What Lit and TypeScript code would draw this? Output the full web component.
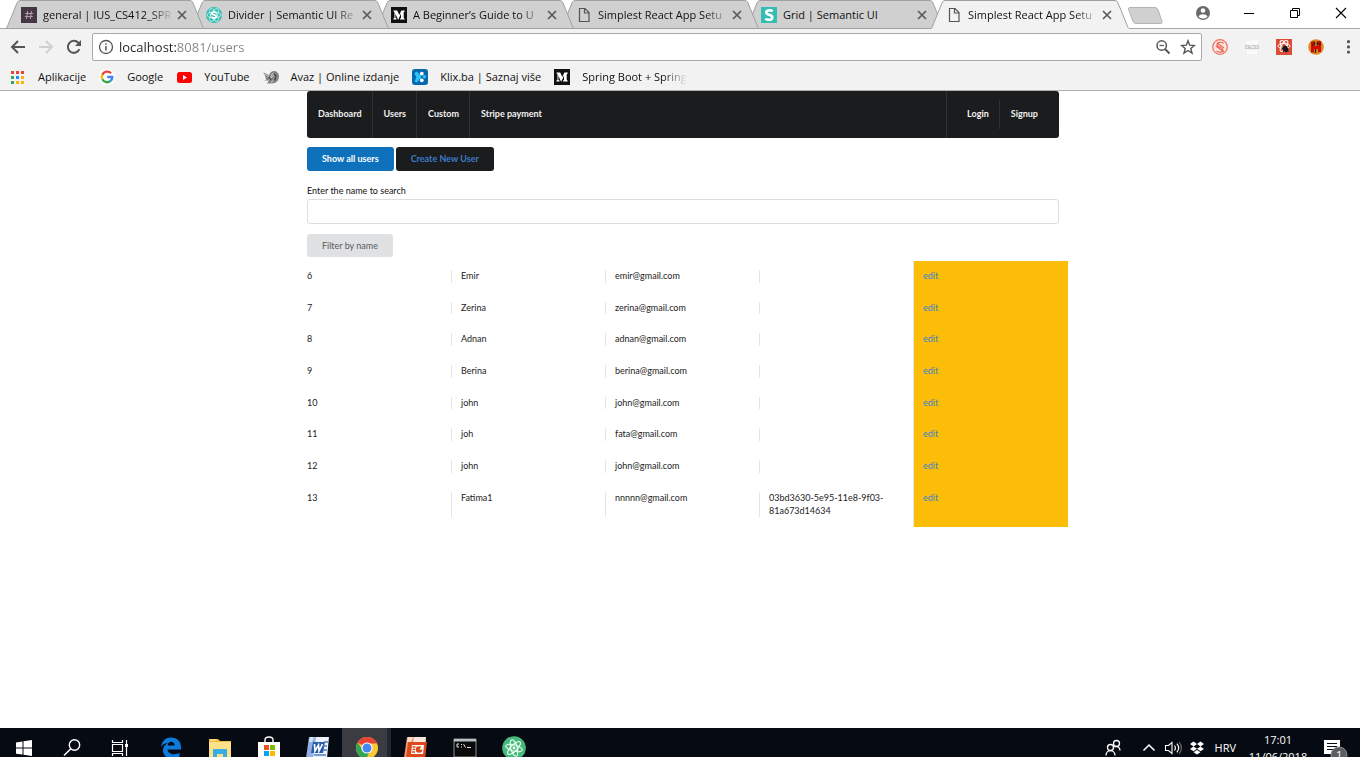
import { LitElement, html, css, svg } from "lit";
import { customElement, property, state } from "lit/decorators.js";

const icons: Record<string, unknown> = {
  slack: svg`<rect width="16" height="16" fill="#443642"/><path d="M6.600 4 5.600 12M10.400 4 9.400 12M4.200 6.500h8M3.800 9.600h8" stroke="#b59fb2" fill="none"/>`,
  react: svg`<circle cx="8" cy="8" r="8" fill="#35bdb2"/><g fill="none" stroke="#c9f3ef" stroke-width=".9"><ellipse cx="8" cy="8" rx="7" ry="3"/><ellipse cx="8" cy="8" rx="7" ry="3" transform="rotate(60 8 8)"/><ellipse cx="8" cy="8" rx="7" ry="3" transform="rotate(120 8 8)"/></g><path d="M10.300 5.800C9 4.700 6 4.800 6 6.400c0 1.800 4.200 1.200 4.200 3.100 0 1.700-3 1.800-4.500.6" stroke="#fff" stroke-width="1.700" fill="none"/>`,
  medium: svg`<rect width="16" height="16" fill="#12100e"/><path d="M2.500 3.500h3.700L8.300 8l2-4.500h3.400v1l-1 .8v5.600l1 .8v.9H9v-.9l1-.8V6.500L7.400 12.600H7L4.400 6.700v4l1.200 1.100v.8H2.400v-.8l1.100-1.100V5.300l-1-1z" fill="#fff"/>`,
  file: svg`<path d="M3.500 1.500h5.500l4 4v9h-9.500zM8.500 1.500V6H13" fill="none" stroke="#555" stroke-width="1.200"/>`,
  semantic: svg`<rect width="16" height="16" fill="#35bdb2"/><path d="M11.700 4.300C9.600 2.800 5.300 2.900 5.300 5.500c0 3 6 1.700 6 4.900 0 3-4.700 2.900-7 1.300" stroke="#fff" stroke-width="2.600" fill="none"/>`,
  apps: svg`<path d="M1 2h3v3H1zM6 2h3v3H6zM11 2h3v3h-3z" fill="#ea4335"/><path d="M1 7h3v3H1zM1 12h3v3H1z" fill="#34a853"/><path d="M6 7h3v3H6z" fill="#1a8cff"/><path d="M11 7h3v3h-3zM6 12h3v3H6zM11 12h3v3h-3z" fill="#fbb605"/>`,
  google: svg`<circle cx="8" cy="8" r="8" fill="#fff"/><g fill="none" stroke-width="2.400"><path d="M12 4.300A5.300 5.300 0 0 0 3.300 5.700" stroke="#ea4335"/><path d="M3.300 5.700a5.300 5.300 0 0 0 0 4.600" stroke="#fbbc05"/><path d="M3.300 10.300a5.300 5.300 0 0 0 8.300 1.600" stroke="#34a853"/><path d="M11.600 11.900A5.300 5.300 0 0 0 13.300 8H8.200" stroke="#4285f4"/></g>`,
  youtube: svg`<rect x="1" y="3" width="15" height="11" rx="2.500" fill="#f00"/><path d="M7 6v5l4-2.500z" fill="#fff"/>`,
  avaz: svg`<path d="M0 3.500c2 .5 4 1 5.500 3L8 3c3-2.500 8-.5 8 4.500 0 4-3 7-7 7H3.500c2-1 2-2 1-3H1l2.500-1C2 9 3 6 0 3.500z" fill="#858585"/><path d="M2 5l5 4 3-5M5 12l6-6M8 13.500l6-5.500" stroke="#c9c9c9" fill="none"/><path d="M11 5c2.500 1 2.500 4 0 6.500M6 8l2 3" stroke="#444" stroke-width="1.400" fill="none"/>`,
  klix: svg`<rect width="16" height="16" rx="3" fill="#0769ad"/><path d="M3 3.500 5 2.500 8 6v3.500L5 13.500l-2.500-1L4.500 8 2.500 5z" fill="#2fc3f7"/><circle cx="9.800" cy="4.600" r="1.900" fill="#fff"/><circle cx="12.400" cy="7.800" r="1.700" fill="#2fc3f7"/><circle cx="9.800" cy="11.300" r="1.900" fill="#fff"/><path d="M6 8h3" stroke="#2fc3f7" stroke-width="4"/>`,
  back: svg`<path d="M15 8H2.500M8 2 2 8l6 6" fill="none" stroke="#555" stroke-width="2"/>`,
  forward: svg`<path d="M1 8h12.500M8 2l6 6-6 6" fill="none" stroke="#d0d0d0" stroke-width="2"/>`,
  reload: svg`<path d="M13.400 10.200A6 6 0 1 1 12.300 3.800L14 5.500" fill="none" stroke="#555" stroke-width="2"/><path d="M15 1v6H9z" fill="#555"/>`,
  info: svg`<circle cx="8" cy="8" r="6.500" fill="none" stroke="#555" stroke-width="1.300"/><path d="M8 7v4.500M8 4.300v1.500" stroke="#555" stroke-width="1.500"/>`,
  zoomOut: svg`<circle cx="6.700" cy="6.500" r="4.700" fill="none" stroke="#555" stroke-width="1.500"/><path d="M10 10l4.500 4.500" stroke="#555" stroke-width="2"/><path d="M4.500 6.500h4.400" stroke="#555" stroke-width="1.200"/>`,
  star: svg`<path d="M8 1.800l1.700 4.400 4.700.3-3.600 3 1.200 4.600L8 11.500l-4 2.600 1.200-4.600-3.600-3 4.700-.3z" fill="none" stroke="#555" stroke-width="1.400"/>`,
  extS: svg`<circle cx="8" cy="8" r="7.300" fill="#fbe9e6" stroke="#f0705f" stroke-width="1.300"/><path d="M11.500 4.500C9.500 2.500 5 3 5 5.700 5 8.500 11 8 11 11c0 2.500-4.500 2.800-6.500.8M4 7l8 6M5 4l7 5" fill="none" stroke="#ee6553" stroke-width="1.200"/>`,
  extGray: svg`<path d="M2 2h5v4H2zM8 1h6v5H8zM3 11h10v4H3z" fill="#fafafa"/><path d="M1 6h14v4H1z" fill="#ccc"/><path d="M3 7v2M6 7h2v2M10 7v2M13 7v2" stroke="#fff" fill="none"/>`,
  extRed: svg`<rect width="16" height="16" fill="#dd4b39"/><g fill="none" stroke="#fff"><ellipse cx="8" cy="7" rx="6" ry="2.500"/><ellipse cx="8" cy="7" rx="6" ry="2.500" transform="rotate(60 8 7)"/><ellipse cx="8" cy="7" rx="6" ry="2.500" transform="rotate(120 8 7)"/></g><ellipse cx="9.500" cy="10" rx="2.600" ry="3.400" fill="#151515" transform="rotate(-35 9.500 10)"/><path d="M5.500 9l7 3M7 13l4-6" stroke="#151515"/>`,
  extBug: svg`<circle cx="8" cy="8" r="7.800" fill="#d98a20"/><path d="M3 2.500h3v11H3zM10 2h3v11h-3zM5 7h6v3H5z" fill="#d50b00"/><path d="M6.500 2.500v4M9.300 2.500v4M7.500 10v4M4 6h1M11 5h2" stroke="#3b1505" stroke-width="1.300"/>`,
  dots: svg`<circle cx="8.500" cy="2.700" r="1.600" fill="#555"/><circle cx="8.500" cy="7.900" r="1.600" fill="#555"/><circle cx="8.500" cy="13.100" r="1.600" fill="#555"/>`,
  close: svg`<path d="M4 4l8 8M12 4l-8 8" stroke="#5a5a5a" stroke-width="1.700"/>`,
  profile: svg`<circle cx="8" cy="8" r="7" fill="#696969"/><circle cx="8" cy="5.500" r="2.300" fill="#fff"/><path d="M3.500 11.400c1.500-3 7.500-3 9 0-2 2.700-7 2.700-9 0z" fill="#fff"/>`,
  minimize: svg`<path d="M3 8.500h10" stroke="#000"/>`,
  restore: svg`<path d="M3.500 5.500h7v7h-7zM5.500 5.500v-2h7v7h-2" fill="none" stroke="#000"/>`,
  exit: svg`<path d="M3 3l10 10M13 3 3 13" stroke="#000" stroke-width="1.100"/>`,
};

const trayIcons: Record<string, unknown> = {
  windows: svg`<path d="M4 6.400l6.500-1v6.100H4zM11.500 5.200 20 4v7.500h-8.500zM4 12.500h6.500v6.100L4 17.700zM11.500 12.500H20V20l-8.500-1.200z" fill="#fff"/>`,
  search: svg`<circle cx="14.500" cy="9" r="5.200" fill="none" stroke="#fff" stroke-width="1.400"/><path d="M10.800 12.700 4 19.500" stroke="#fff" stroke-width="1.500"/>`,
  taskview: svg`<path d="M4.500 4v2.500h10V4M4.500 8.500h10v7h-10zM4.500 20v-2.500h10V20M18.500 4v16" fill="none" stroke="#fff" stroke-width="1.200"/><path d="M17 8h3v3h-3z" fill="#fff"/>`,
  edge: svg`<path d="M2 11C3 4.500 7 1.500 12 1.500c6 0 10 4 10 9.500v2.500H8.500c.4 5 7.500 6 12 3.300V21C12 25 3.500 21.500 4 14c.2-3 2-5.500 5-7C6 7 3.500 8.500 2 11zm6.700-1.500h7C15.500 4.500 9 4.500 8.700 9.500z" fill="#0c7bdc"/>`,
  folder: svg`<path d="M1 3h9l2 2h11v17H1z" fill="#f2bd3a"/><path d="M1 6h22v16H1z" fill="#ffe08b"/><path d="M5 13h14v9h-4v-4H9v4H5z" fill="#39ade3"/><path d="M2 4h6" stroke="#fff3c0"/>`,
  store: svg`<path d="M8 6V4c0-4 8-4 8 0v2" fill="none" stroke="#fff" stroke-width="1.400"/><path d="M1 6h22v17H1z" fill="#fff"/><path d="M7 9h5v5H7z" fill="#f25022"/><path d="M13 9h5v5h-5z" fill="#7fba00"/><path d="M7 15h5v5H7z" fill="#00a4ef"/><path d="M13 15h5v5h-5z" fill="#ffb900"/>`,
  word: svg`<path d="M5 1h18l-2 21H5z" fill="#eef3fb"/><path d="M3 1h7L7 22H0z" fill="#8fb0e0"/><path d="M4 1h4L6 6H3z" fill="#d5e2f6"/><path d="M7 6h12l-2 11H5z" fill="#2a5caa"/><path d="M8.500 8l.5 7 3.500-6 .5 6 3.500-7" fill="none" stroke="#fff" stroke-width="1.600"/><path d="M18 6h4M17 10h4M17 14h4M8 19h12" stroke="#4e7fc4" stroke-width="1.500"/>`,
  chrome: svg`<circle cx="12" cy="12" r="11" fill="#fcc934"/><path d="M12 12 2.500 6.500A11 11 0 0 1 22 7.500H12z" fill="#e94335"/><path d="M2.500 6.500A11 11 0 0 0 11 23l4.500-9L8 14z" fill="#35a455"/><circle cx="12" cy="12" r="5.600" fill="#fff"/><circle cx="12" cy="12" r="4.500" fill="#4588f1"/>`,
  powerpoint: svg`<path d="M5 1h17l-1 21H5z" fill="#fbe8df"/><path d="M3 1h7L7 22H0z" fill="#ef9a7a"/><path d="M4 1h5L7 6H3z" fill="#fbd9cb"/><path d="M4 6h19l-2 16H2z" fill="#dc4a1c"/><path d="M8 9h12l-1 9H7z" fill="#fff"/><circle cx="15" cy="13.500" r="3.300" fill="#dc4a1c"/><path d="M15 13.500h3.500V10z" fill="#fff"/><path d="M8.500 11h3M8.500 13.500h2.500M8 16h3" stroke="#dc4a1c" stroke-width="1.300"/>`,
  console: svg`<path d="M1 3h22v18H1z" fill="#0a0a0a" stroke="#8d8d8d"/><path d="M1 3h22v2.500H1z" fill="#b9bfc6"/><path d="M6 8H4v3h2M8.500 8v1M8.500 10.500v1M10.500 8l2 3.500M14 11.500h4" stroke="#e5e5e5" fill="none"/>`,
  atom: svg`<circle cx="12" cy="12" r="11.800" fill="#48b97c"/><g fill="none" stroke="#eafff3" stroke-width="1.100"><ellipse cx="12" cy="12" rx="8.500" ry="3.200" transform="rotate(15 12 12)"/><ellipse cx="12" cy="12" rx="8.500" ry="3.200" transform="rotate(75 12 12)"/><ellipse cx="12" cy="12" rx="8.500" ry="3.200" transform="rotate(135 12 12)"/></g><circle cx="12" cy="12" r="1.400" fill="#fff"/>`,
  people: svg`<g fill="none" stroke="#fff" stroke-width="1.300"><circle cx="9.500" cy="11.500" r="3"/><path d="M5 19.500c0-6.500 9-6.500 9 0"/><circle cx="15.500" cy="7.500" r="3"/><path d="M13.500 11c3-1.500 5.500.5 5.500 3.500"/></g>`,
  chevron: svg`<path d="M6.500 14.500l5.500-5.500 5.500 5.500" fill="none" stroke="#fff" stroke-width="1.500"/>`,
  speaker: svg`<path d="M4.500 9.500h3l3.500-3v11l-3.500-3h-3z" fill="none" stroke="#fff" stroke-width="1.100"/><path d="M13.500 9.500c1.200 1.500 1.200 3.500 0 5M15.800 7.700c2.300 2.500 2.300 6 0 8.600" fill="none" stroke="#fff" stroke-width="1.100"/><path d="M18 6c3.200 3.500 3.200 8.500 0 12" fill="none" stroke="#777" stroke-width="1.100"/>`,
  dropbox: svg`<path d="M8.500 5.500 12 8l3.500-2.500L19 8l-3.500 2.500L19 13l-3.500 2.200L12 12.700l-3.500 2.500L5 13l3.500-2.500L5 8zM8.500 16.200 12 14l3.500 2.200L12 18.500zM12 8l-3.500 2.500L12 12.700l3.500-2.200z" fill="#fff" fill-rule="evenodd"/>`,
};

@customElement("ui-icon")
class UiIcon extends LitElement {
  static styles = css`
    :host { display: block; flex: none; line-height: 0; }
    .small { width: 16px; height: 16px; }
    .large { width: 24px; height: 24px; }
  `;
  @property() name = "";
  render() {
    return this.name in icons
      ? html`<svg class="small" viewBox="0 0 16 16" aria-hidden="true">${icons[this.name]}</svg>`
      : html`<svg class="large" viewBox="0 0 24 24" aria-hidden="true">${trayIcons[this.name]}</svg>`;
  }
}

const tabs = [
  ["slack", "general | IUS_CS412_SPR"],
  ["react", "Divider | Semantic UI Re"],
  ["medium", "A Beginner’s Guide to U"],
  ["file", "Simplest React App Setu"],
  ["semantic", "Grid | Semantic UI"],
  ["file", "Simplest React App Setu"],
];

@customElement("browser-chrome")
class BrowserChrome extends LitElement {
  static styles = css`
    :host { display: block; font: 11px/16px "Open Sans", "Noto Sans", sans-serif; color: #111; }
    button { border: 0; padding: 0; background: none; font: inherit; color: inherit; }
    .strip { display: flex; align-items: flex-start; height: 29px; padding-left: 6px; background: linear-gradient(#fff 28px, #a8a8a8 28px); isolation: isolate; }
    .tab { position: relative; display: flex; align-items: center; flex: 0 1 198px; min-width: 0; height: 29px; padding: 0 14px 0 15px; margin-right: -13px; box-sizing: border-box; }
    .tab:nth-child(1) { z-index: 5; }
    .tab:nth-child(2) { z-index: 4; }
    .tab:nth-child(3) { z-index: 3; }
    .tab:nth-child(4) { z-index: 2; }
    .tab:nth-child(5) { z-index: 1; }
    .tab.active { z-index: 6; }
    .shape { position: absolute; inset: 0; width: 100%; height: 100%; z-index: -1; }
    .title { flex: 1; min-width: 0; margin-left: 6px; white-space: nowrap; text-align: left; }
    .faded { -webkit-mask-image: linear-gradient(90deg, #000 calc(100% - 24px), transparent); }
    .newtab { width: 36px; height: 19px; margin: 6px 0 0 11px; }
    .newtab svg { display: block; }
    .window { display: flex; align-items: center; gap: 30px; margin-left: auto; padding: 5px 11px 0 0; }
    .toolbar { display: flex; align-items: center; height: 36px; padding: 0 4px 0 10px; background: #f2f2f2; }
    .nav { display: flex; gap: 12px; }
    .address { display: flex; align-items: center; flex: 1; height: 26px; margin: 0 10px; padding: 0 5px; border: 1px solid #a9a9a9; border-radius: 2px; background: #fff; }
    .url { flex: 1; min-width: 0; height: 20px; margin: 0 6px 0 5px; padding: 0; border: 0; outline: 0; font: 13px/20px "Open Sans", "Noto Sans", sans-serif; background: linear-gradient(90deg, #222 57px, #848484 57px); -webkit-background-clip: text; background-clip: text; -webkit-text-fill-color: transparent; }
    .tools { display: flex; gap: 9px; }
    .extensions { display: flex; gap: 16px; }
    .bookmarks { display: flex; align-items: center; height: 23px; padding: 0 0 2px 10px; background: #f2f2f2; border-bottom: 1px solid #b0b0b0; gap: 13px; }
    .bookmark { display: flex; gap: 12px; align-items: center; color: inherit; text-decoration: none; white-space: nowrap; }
  `;
  @state() selected = 5;
  render() {
    const bookmarks = [
      ["apps", "Aplikacije"], ["google", "Google"], ["youtube", "YouTube"],
      ["avaz", "Avaz | Online izdanje"], ["klix", "Klix.ba | Saznaj više"], ["medium", "Spring Boot + Spring"],
    ];
    return html`
      <div class="strip">
        ${tabs.map(([icon, title], i) => html`
          <div class="tab ${i === this.selected ? "active" : ""}">
            <svg class="shape" viewBox="0 0 198 29" preserveAspectRatio="none" aria-hidden="true">
              <path d="M0 29 Q1 28 2 25L11 3Q12 .5 14 .5H184Q186 .5 187 3L196 25Q197 28 198 28.500V29Z" fill=${i === this.selected ? "#f2f2f2" : "#d0d0d0"} />
              <path d="M0 28.500Q1 28 2 25L11 3Q12 .5 14 .5H184Q186 .5 187 3L196 25Q197 28 198 28.500${i === this.selected ? "" : "H0"}" fill="none" stroke="#a0a0a0" />
            </svg>
            <ui-icon name=${icon}></ui-icon>
            <button class="title ${i === 4 ? "" : "faded"}" @click=${() => (this.selected = i)}>${title}</button>
            <button class="close" aria-label="Close tab"><ui-icon name="close"></ui-icon></button>
          </div>`)}
        <button class="newtab" aria-label="New tab">
          <svg width="36" height="19" viewBox="0 0 36 19"><path d="M3 1.500h25q2 0 3 2l4 12q.5 2-1.500 2H9q-2 0-3-2L1.500 3.500q-.5-2 1.500-2z" fill="#d0d0d0" stroke="#b4b4b4" /></svg>
        </button>
        <div class="window">
          ${["profile", "minimize", "restore", "exit"].map((n) => html`<button aria-label=${n}><ui-icon name=${n}></ui-icon></button>`)}
        </div>
      </div>
      <div class="toolbar">
        <div class="nav">
          ${["back", "forward", "reload"].map((n) => html`<button aria-label=${n}><ui-icon name=${n}></ui-icon></button>`)}
        </div>
        <div class="address">
          <ui-icon name="info"></ui-icon>
          <input class="url" aria-label="Address" value="localhost:8081/users" spellcheck="false" />
          <div class="tools">
            <button aria-label="Zoom"><ui-icon name="zoomOut"></ui-icon></button>
            <button aria-label="Bookmark"><ui-icon name="star"></ui-icon></button>
          </div>
        </div>
        <div class="extensions">
          ${["extS", "extGray", "extRed", "extBug", "dots"].map((n) => html`<button aria-label=${n}><ui-icon name=${n}></ui-icon></button>`)}
        </div>
      </div>
      <nav class="bookmarks">
        ${bookmarks.map(([icon, label], i) => html`<a class="bookmark" href="#"><ui-icon name=${icon}></ui-icon><span class=${i === 5 ? "faded" : ""}>${label}</span></a>`)}
      </nav>`;
  }
}

const users = [
  [6, "Emir", "emir@gmail.com", ""],
  [7, "Zerina", "zerina@gmail.com", ""],
  [8, "Adnan", "adnan@gmail.com", ""],
  [9, "Berina", "berina@gmail.com", ""],
  [10, "john", "john@gmail.com", ""],
  [11, "joh", "fata@gmail.com", ""],
  [12, "john", "john@gmail.com", ""],
  [13, "Fatima1", "nnnnn@gmail.com", "03bd3630-5e95-11e8-9f03-81a673d14634"],
];

@customElement("users-page")
class UsersPage extends LitElement {
  static styles = css`
    :host { display: block; padding-left: 6px; background: #fff; font: 9px/1.41 Lato, sans-serif; color: #222; }
    .container { max-width: 752px; margin: 0 auto; }
    a { color: inherit; text-decoration: none; }
    .menu { display: flex; height: 47px; border-radius: 3px; background: #1b1c1d; color: #f2f2f2; font-weight: 700; box-sizing: border-box; }
    .item { display: flex; align-items: center; padding: 0 10px 0 11px; border-right: 1px solid #2f3031; }
    .item:last-of-type { border-right: 0; }
    .right { display: flex; margin-left: auto; padding: 9px 11px 9px 9px; border-left: 1px solid #2f3031; }
    .actions { display: flex; gap: 2px; margin-top: 9px; }
    .button { height: 24px; padding: 0 15px; border: 0; border-radius: 3px; font: 700 9px/12px Lato, sans-serif; }
    .primary { background: #0d71bb; color: #fff; }
    .dark { background: #1b1c1d; color: #3d7bc8; }
    .neutral { height: 23px; margin-top: 10px; background: #e0e1e2; color: #5a5a5b; font-weight: 400; }
    .label { display: block; margin: 13px 0 2px; line-height: 13px; color: #111; }
    .search { display: block; width: 100%; height: 25px; padding: 0 9px; border: 1px solid #dededf; border-radius: 3px; box-sizing: border-box; font: inherit; }
    .users { display: block; margin: 4px -9px 0; }
    .users tbody { display: block; }
    .row { display: grid; grid-template-columns: repeat(5, minmax(0, 1fr)); padding: 9px 0 10px; }
    .cell { padding: 0 9px; box-shadow: -1px 0 0 #e5e5e6; }
    .cell:first-child { box-shadow: none; }
    .edit { margin: -9px 0 -10px; padding: 9px 9px 10px; background: #fbbd08; color: #4183c4; }
  `;
  render() {
    return html`
      <div class="container">
        <nav class="menu">
          ${["Dashboard", "Users", "Custom"].map((t) => html`<a class="item" href="#">${t}</a>`)}
          <a class="item" href="#">Stripe payment</a>
          <div class="right"><a class="item" href="#">Login</a><a class="item" href="#">Signup</a></div>
        </nav>
        <div class="actions">
          <button class="button primary">Show all users</button>
          <button class="button dark">Create New User</button>
        </div>
        <label class="label" for="search">Enter the name to search</label>
        <input class="search" id="search" type="text" />
        <button class="button neutral">Filter by name</button>
        <table class="users">
          <tbody>
            ${users.map(([id, name, mail, token]) => html`
              <tr class="row">
                <td class="cell">${id}</td><td class="cell">${name}</td><td class="cell">${mail}</td><td class="cell">${token}</td>
                <td class="cell edit"><a href="#">edit</a></td>
              </tr>`)}
          </tbody>
        </table>
      </div>`;
  }
}

@customElement("task-bar")
class TaskBar extends LitElement {
  static styles = css`
    :host { display: block; height: 29px; overflow: hidden; background: #060a12; color: #fff; font: 11px/17px "Open Sans", "Noto Sans", sans-serif; }
    .bar { display: flex; height: 39px; }
    .app { display: flex; align-items: center; justify-content: center; width: 49px; padding: 0; border: 0; background: none; }
    .system { width: 48px; }
    .system + .app:not(.system) { margin-left: 2px; }
    .current { background: linear-gradient(90deg, #3a3c42 45px, #24272d 45px); }
    .tray { display: flex; align-items: center; margin-left: auto; padding-right: 10px; }
    .people { margin-right: 12px; }
    .lang { margin: 0 12px 0 6px; }
    .clock { width: 60px; margin-right: 14px; text-align: center; white-space: nowrap; }
    .notice { display: block; }
  `;
  render() {
    const system = ["windows", "search", "taskview"];
    const apps = ["edge", "folder", "store", "word", "chrome", "powerpoint", "console", "atom"];
    return html`
      <div class="bar">
        ${system.map((n) => html`<button class="app system" aria-label=${n}><ui-icon name=${n}></ui-icon></button>`)}
        ${apps.map((n) => html`<button class="app ${n === "chrome" ? "current" : ""}" aria-label=${n}><ui-icon name=${n}></ui-icon></button>`)}
        <div class="tray">
          <ui-icon class="people" name="people"></ui-icon>
          <ui-icon name="chevron"></ui-icon>
          <ui-icon name="speaker"></ui-icon>
          <ui-icon name="dropbox"></ui-icon>
          <span class="lang">HRV</span>
          <div class="clock">17:01<br />11/06/2018</div>
          <svg class="notice" width="28" height="32" viewBox="0 0 28 32" aria-hidden="true">
            <path d="M2 8h16v14h-5l-4 4v-4H2z" fill="#fff" /><path d="M5 11.500h10M5 14.500h10M5 17.500h7" stroke="#060a12" />
            <circle cx="17" cy="23" r="8" fill="#5b5e62" stroke="#8a8c8f" /><text x="14" y="27" fill="#fff" font-size="11">1</text>
          </svg>
        </div>
      </div>`;
  }
}

@customElement("app-root")
class AppRoot extends LitElement {
  static styles = css`
    :host { display: flex; flex-direction: column; height: 100vh; overflow: hidden; background: #fff; }
    .page { flex: 1; min-height: 0; overflow: hidden; }
  `;
  render() {
    return html`<browser-chrome></browser-chrome><users-page class="page"></users-page><task-bar></task-bar>`;
  }
}
